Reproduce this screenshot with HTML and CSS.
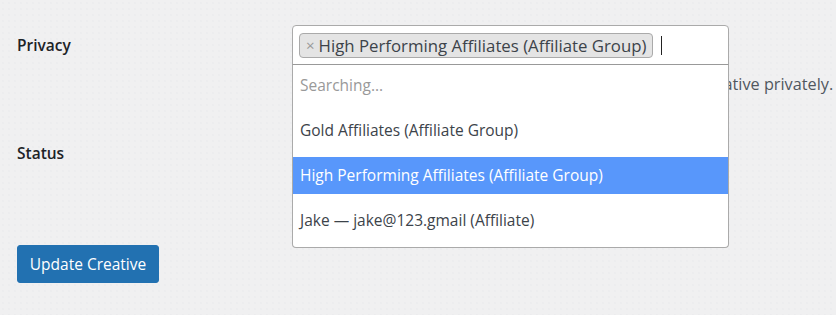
FILE: index.html
```html
<!DOCTYPE html>
<html lang="en">

<head>
  <meta charset="UTF-8">
  <meta name="viewport" content="width=device-width, initial-scale=1.0">
  <title>Edit Creative</title>
  <link rel="stylesheet" href="styles.css">
</head>

<body>
  <form class="creative-form">
    <div class="form-row privacy-row">
      <label class="row-label">Privacy</label>
      <div class="row-field">
        <div class="select2 is-open">
          <div class="selection">
            <span class="choice"><span class="choice-remove">×</span>High Performing Affiliates (Affiliate Group)</span>
            <span class="search-caret"></span>
          </div>
          <ul class="dropdown">
            <li class="option is-searching">Searching...</li>
            <li class="option">Gold Affiliates (Affiliate Group)</li>
            <li class="option is-highlighted">High Performing Affiliates (Affiliate Group)</li>
            <li class="option">Jake — jake@123.gmail (Affiliate)</li>
          </ul>
        </div>
        <p class="description">Select affiliates or affiliate groups that should see this creative privately.</p>
      </div>
    </div>
    <div class="form-row status-row">
      <label class="row-label">Status</label>
      <div class="row-field">
        <select class="status-select">
          <option>Active</option>
        </select>
      </div>
    </div>
    <button type="button" class="button-primary">Update Creative</button>
  </form>
</body>

</html>
```

FILE: styles.css
```css
* {
  box-sizing: border-box;
}

body {
  margin: 0;
  background-color: #f0f0f1;
  background-image: radial-gradient(#e7e8ec 0.6px, transparent 0.8px);
  background-size: 6px 6px;
  color: #3c434a;
  font-family: "Open Sans", "Noto Sans", sans-serif;
  font-size: 15.5px;
  overflow: hidden;
}

.creative-form {
  padding: 25px 0 0 17px;
}

.form-row {
  display: grid;
  grid-template-columns: 275px 1fr;
}

.row-label {
  color: #1d2327;
  font-weight: 600;
  line-height: 40px;
}

.row-field {
  min-width: 0;
}

.select2 {
  position: relative;
  width: 437px;
}

.selection {
  display: flex;
  align-items: center;
  gap: 8px;
  height: 40px;
  padding: 0 6px;
  background: #fff;
  border: 1px solid #aaa;
  border-radius: 4px;
}

.select2.is-open .selection {
  border-radius: 4px 4px 0 0;
}

.choice {
  display: flex;
  align-items: center;
  height: 25px;
  padding: 0 6px;
  background: #e4e4e4;
  border: 1px solid #aaa;
  border-radius: 4px;
  color: #3c434a;
  font-size: 16.8px;
  white-space: nowrap;
}

.choice-remove {
  color: #999;
  font-size: 15px;
  margin-right: 4px;
}

.search-caret {
  width: 1px;
  height: 19px;
  background: #222;
}

.dropdown {
  position: absolute;
  top: 100%;
  left: 0;
  width: 100%;
  margin: -1px 0 0;
  padding: 2px 0 8px;
  list-style: none;
  display: flex;
  flex-direction: column;
  gap: 7px;
  background: #fff;
  border: 1px solid #aaa;
  border-top-color: #999;
  border-radius: 0 0 4px 4px;
  z-index: 2;
}

.option {
  height: 37px;
  line-height: 37px;
  padding: 0 7px;
  white-space: nowrap;
}

.option + .option {
  margin-top: 1px;
}

.option.is-searching {
  color: #999;
}

.option.is-highlighted {
  background: #5897fb;
  color: #fff;
}

.description {
  margin: 8px 0 0;
  color: #50575e;
  font-size: 16.25px;
  white-space: nowrap;
}

.status-row {
  margin-top: 38px;
}

.status-select {
  height: 30px;
  margin-top: 4px;
}

.button-primary {
  display: block;
  margin-top: 72px;
  width: 142px;
  height: 38px;
  padding: 0;
  background: #2271b1;
  border: 1px solid #2271b1;
  border-radius: 3px;
  color: #fff;
  font-family: inherit;
  font-size: 15.5px;
}
```
